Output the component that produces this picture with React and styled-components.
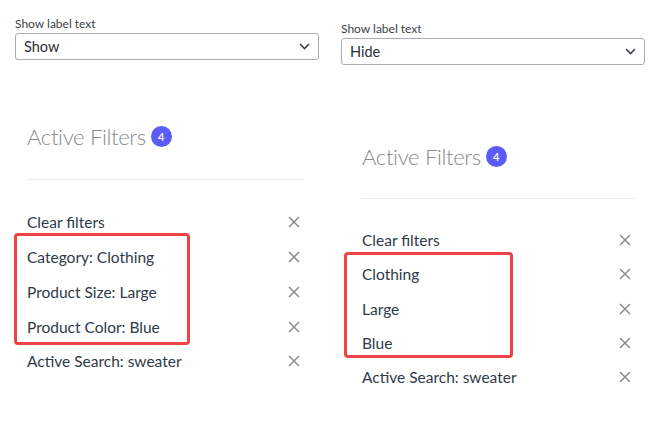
import React from 'react';
import styled, {createGlobalStyle} from 'styled-components';

const GlobalStyle = createGlobalStyle`
  html, body {
    margin: 0;
    padding: 0;
    background: #ffffff;
  }
  body {
    font-family: Lato, "Open Sans", sans-serif;
    color: #2e3a48;
  }
`

const Page = styled.div`
  width: 661px;
  height: 435px;
  display: grid;
  grid-template-columns: 304px 304px;
  column-gap: 22px;
  padding: 0 0 0 15px;
  box-sizing: border-box;
  align-items: start;
`

const Column = styled.section`
  display: flex;
  flex-direction: column;
  padding-top: ${p => p.$top}px;
`

const Label = styled.label`
  font-size: 12px;
  line-height: 15px;
  color: #3a3f47;
  margin-bottom: 2px;
`

const Select = styled.div`
  height: 27px;
  box-sizing: border-box;
  border: 1px solid #a9adb3;
  border-radius: 3px;
  display: flex;
  align-items: center;
  justify-content: space-between;
  padding: 0 8px 0 8px;
  font-size: 14.5px;
  color: #2a2f36;
`

const Chevron = () => (
    <svg width="11" height="7" viewBox="0 0 11 7" fill="none">
        <path d="M1 1l4.5 4.5L10 1" stroke="#3a3f47" strokeWidth="1.6"/>
    </svg>
)

const Filters = styled.div`
  padding: ${p => p.$gap}px ${p => p.$right}px 0 ${p => p.$left}px;
`

const Heading = styled.h2`
  margin: 0;
  height: 30px;
  display: flex;
  align-items: center;
  gap: 5px;
  font-size: 22.2px;
  font-weight: 300;
  color: #8a8a8a;
  letter-spacing: -0.4px;
`

const Badge = styled.span`
  width: 21px;
  height: 21px;
  border-radius: 50%;
  background: #5b5cf6;
  color: #ffffff;
  font-size: 11px;
  font-weight: 600;
  letter-spacing: 0;
  display: inline-flex;
  align-items: center;
  justify-content: center;
  margin-top: 1px;
`

const Divider = styled.hr`
  border: none;
  border-top: 1px solid #ececec;
  margin: ${p => p.$above}px 0 ${p => p.$below}px 0;
`

const List = styled.ul`
  list-style: none;
  margin: 0;
  padding: 0;
`

const Highlight = styled.li`
  position: relative;

  &::after {
    content: '';
    position: absolute;
    left: ${p => p.$left}px;
    top: ${p => p.$top}px;
    width: ${p => p.$width}px;
    bottom: ${p => p.$bottom}px;
    border: 3px solid #ef4444;
    border-radius: 4px;
    box-sizing: border-box;
    pointer-events: none;
  }
`

const Row = styled.li`
  height: ${p => p.$h}px;
  display: flex;
  align-items: center;
  justify-content: space-between;
  padding-right: 4px;
  font-size: 15.5px;
  color: #2e3a48;
`

const Close = () => (
    <svg width="12" height="12" viewBox="0 0 12 12">
        <path d="M1 1l10 10M11 1L1 11" stroke="#8c8c8c" strokeWidth="1.5"/>
    </svg>
)

const FilterRow = ({text, h}) => (
    <Row $h={h}>
        <span>{text}</span>
        <Close/>
    </Row>
)

const panels = [
    {
        top: 16, value: 'Show', gap: 61, left: 12, right: 15, above: 28, below: 25, h: 34.75,
        box: {left: -13, top: -7, width: 176, bottom: -1},
        items: ['Category: Clothing', 'Product Size: Large', 'Product Color: Blue'],
    },
    {
        top: 21, value: 'Hide', gap: 76, left: 21, right: 10, above: 27, below: 24, h: 34.25,
        box: {left: -18, top: -5, width: 169, bottom: 2},
        items: ['Clothing', 'Large', 'Blue'],
    },
]

const Panel = ({p}) => (
    <Column $top={p.top}>
        <Label>Show label text</Label>
        <Select>
            <span>{p.value}</span>
            <Chevron/>
        </Select>
        <Filters $gap={p.gap} $left={p.left} $right={p.right}>
            <Heading>Active Filters <Badge>4</Badge></Heading>
            <Divider $above={p.above} $below={p.below}/>
            <List>
                <FilterRow text="Clear filters" h={p.h}/>
                <Highlight $left={p.box.left} $top={p.box.top} $width={p.box.width} $bottom={p.box.bottom}>
                    <List>
                        {p.items.map(t => <FilterRow key={t} text={t} h={p.h}/>)}
                    </List>
                </Highlight>
                <FilterRow text="Active Search: sweater" h={p.h}/>
            </List>
        </Filters>
    </Column>
)

export default function App() {
    return (
        <>
            <GlobalStyle/>
            <Page>
                {panels.map(p => <Panel key={p.value} p={p}/>)}
            </Page>
        </>
    )
}
